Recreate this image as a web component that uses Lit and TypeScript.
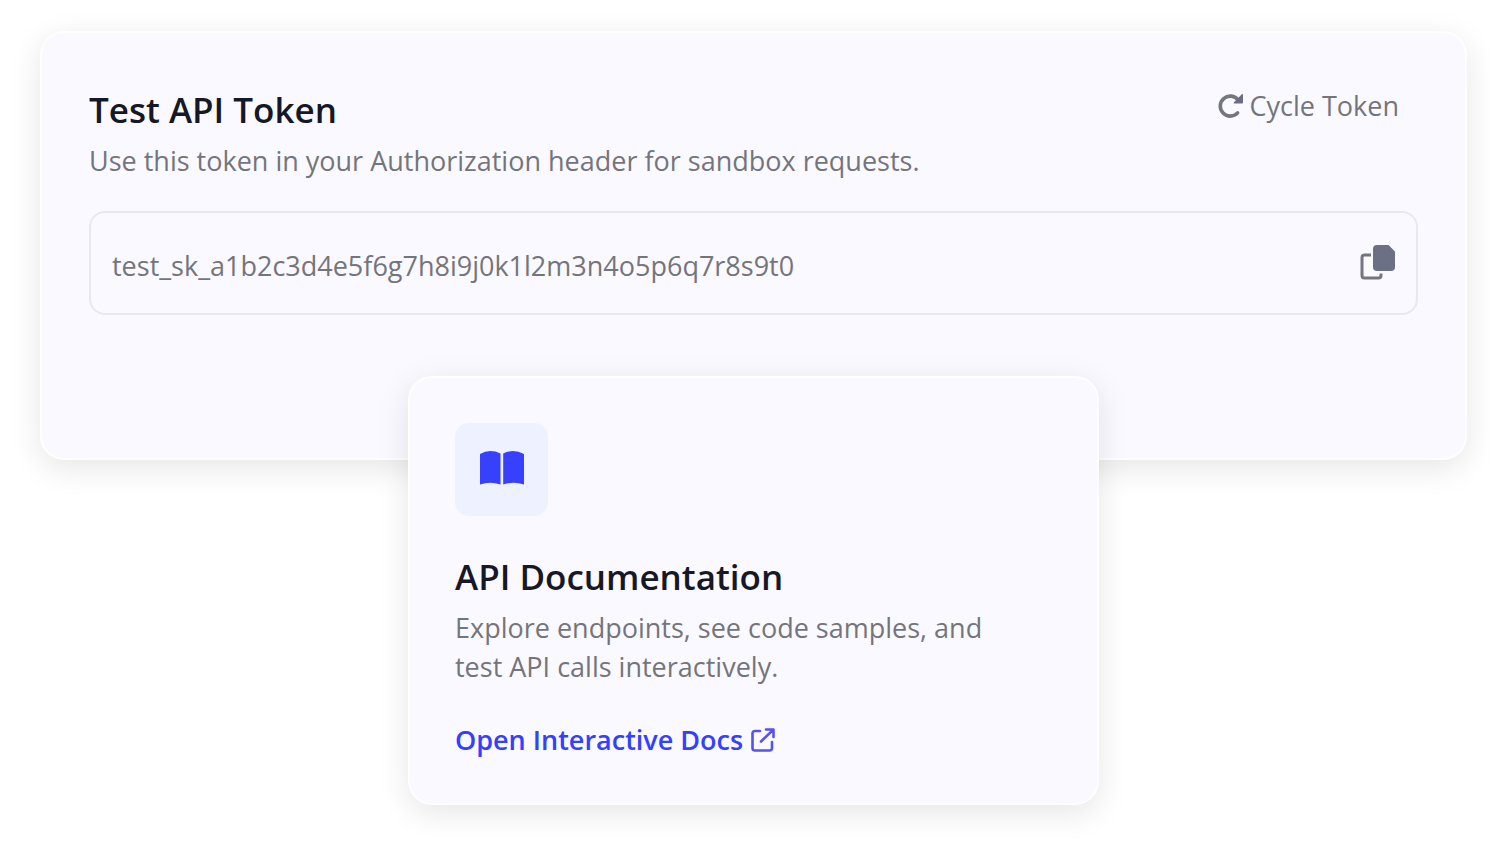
import { LitElement, html, css } from "lit";
import { customElement, property } from "lit/decorators.js";

const base = css`
  :host {
    display: block;
    font-family: "Open Sans", "Noto Sans", sans-serif;
    font-size: 27px;
    line-height: 39px;
    color: #74757c;
  }
  * {
    box-sizing: border-box;
  }
  svg {
    display: block;
    flex: none;
  }
  .card {
    background: #faf9ff;
    border: 2px solid #fefeff;
    border-radius: 24px;
    box-shadow: 0 8px 32px rgba(0, 0, 0, 0.1);
  }
  .title {
    margin: 0 0 7px;
    font-size: 35px;
    line-height: 48px;
    font-weight: 600;
    color: #161827;
  }
  .text {
    margin: 0;
  }
`;

@customElement("token-card")
export class TokenCard extends LitElement {
  @property() token = "";

  static styles = [
    base,
    css`
      .card {
        padding: 53px 47px 143px;
      }
      .header {
        display: flex;
        justify-content: space-between;
        align-items: flex-start;
      }
      .button {
        display: flex;
        align-items: center;
        border: 0;
        padding: 0;
        background: none;
        color: inherit;
        font: inherit;
        cursor: pointer;
      }
      .cycle {
        gap: 7px;
        margin-right: 19px;
      }
      .field {
        display: flex;
        align-items: center;
        gap: 24px;
        margin-top: 31px;
        padding: 28px 20px 29px 21px;
        border: 2px solid #e8e8ed;
        border-radius: 16px;
      }
      .value {
        flex: 1;
        min-width: 0;
        height: 43px;
        border: 0;
        padding: 5px 0 0;
        background: none;
        color: inherit;
        font: inherit;
        outline: none;
      }
    `,
  ];

  private copy() {
    navigator.clipboard?.writeText(this.token);
  }

  render() {
    return html`
      <section class="card">
        <div class="header">
          <div>
            <h2 class="title">Test API Token</h2>
            <p class="text">Use this token in your Authorization header for sandbox requests.</p>
          </div>
          <button class="button cycle" type="button">
            <svg width="25" height="25" viewBox="0 0 25 25" aria-hidden="true">
              <path d="M19.6 19.9A10 10 0 1 1 20.2 7" fill="none" stroke="#74757e" stroke-width="3.6" stroke-linecap="round" />
              <path d="M23.600 1.400Q25 .6 25 2V9.600Q25 10.600 24 10.600H16.400Q15 10.400 16 9.200Z" fill="#6b6c83" />
            </svg>
            Cycle Token
          </button>
        </div>
        <div class="field">
          <input class="value" aria-label="Test API token" readonly .value=${this.token} />
          <button class="button" type="button" aria-label="Copy token" @click=${this.copy}>
            <svg width="36" height="36" viewBox="0 0 36 36" aria-hidden="true">
              <path d="M11 10H4.500Q2 10 2 12.500V30.500Q2 33 4.500 33H18.500Q21 33 21 30.500V28.500" fill="none" stroke="#74757e" stroke-width="3" />
              <path d="M17 0H28.500L35 6.500V22Q35 26 31 26H17Q13 26 13 22V4Q13 0 17 0Z" fill="#6b7085" />
            </svg>
          </button>
        </div>
      </section>
    `;
  }
}

@customElement("docs-card")
export class DocsCard extends LitElement {
  static styles = [
    base,
    css`
      .card {
        padding: 45px 45px 44px;
      }
      .tile {
        display: grid;
        place-items: center;
        width: 93px;
        height: 93px;
        margin-bottom: 37px;
        padding-bottom: 3px;
        border-radius: 14px;
        background: #eef1ff;
      }
      .text {
        max-width: 560px;
      }
      .link {
        display: inline-flex;
        align-items: center;
        gap: 8px;
        margin-top: 34px;
        color: #3340ff;
        font-weight: 600;
        text-decoration: none;
        vertical-align: top;
      }
    `,
  ];

  render() {
    return html`
      <section class="card">
        <div class="tile">
          <svg width="44" height="34" viewBox="0 0 44 34" fill="#3740ff" aria-hidden="true">
            <path d="M0 3Q10 -2.500 20.500 2.500V33.500Q10 30 0 33.500Z" />
            <path d="M23.200 2.500Q33.500 -2.500 44 3V33.500Q33.500 30 23.200 33.500Z" />
          </svg>
        </div>
        <h2 class="title">API Documentation</h2>
        <p class="text">Explore endpoints, see code samples, and test API calls interactively.</p>
        <a class="link" href="#docs">
          Open Interactive Docs
          <svg width="24" height="24" viewBox="0 0 24 24" fill="none" stroke="#5552ee" stroke-width="2.600" stroke-linecap="round" stroke-linejoin="round" aria-hidden="true">
            <path d="M9 3H4Q1.500 3 1.500 5.500V20Q1.500 22.500 4 22.500H18.500Q21 22.500 21 20V14" />
            <path d="M15 1.500H22.500V9M22 2L10 13.500" />
          </svg>
        </a>
      </section>
    `;
  }
}

@customElement("app-root")
export class AppRoot extends LitElement {
  static styles = css`
    :host {
      display: block;
      min-height: 100vh;
      box-sizing: border-box;
      padding: 31px 40px 49px;
      background: #fff;
    }
    .docs {
      position: relative;
      max-width: 691px;
      margin: -84px auto 0;
    }
  `;

  render() {
    return html`
      <token-card token="test_sk_a1b2c3d4e5f6g7h8i9j0k1l2m3n4o5p6q7r8s9t0"></token-card>
      <docs-card class="docs"></docs-card>
    `;
  }
}
